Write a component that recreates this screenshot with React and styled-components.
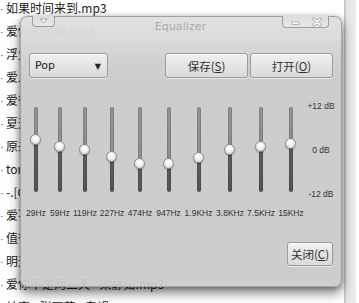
import React from "react";
import styled, { createGlobalStyle } from "styled-components";

const Global = createGlobalStyle`
  html, body { margin: 0; padding: 0; background: #ffffff; overflow: hidden; }
  #root { width: 359px; height: 303px; }
`;

const Page = styled.div`
  position: relative;
  width: 359px;
  height: 303px;
  overflow: hidden;
  display: flex;
  background: #ffffff;
`;

const FileList = styled.ul`
  flex: 1;
  list-style: none;
  margin: -4px 0 0 0;
  padding: 0;
  font-family: "Noto Sans CJK SC", "Noto Sans", sans-serif;
  font-size: 12px;
  color: #1c1c1c;
`;

const FileRow = styled.li`
  display: flex;
  align-items: center;
  height: 23px;
  white-space: nowrap;
`;

const Bullet = styled.span`
  width: 6px;
  flex: none;
  overflow: hidden;
  color: #555;
  font-family: "Liberation Sans", sans-serif;
  font-size: 11px;
  padding-top: 3px;
`;

const ScrollTrack = styled.div`
  width: 11px;
  margin-right: 3px;
  background: linear-gradient(to right, #cfcfcf 0, #e6e6e6 2px, #ececec 100%);
  border-left: 1px solid #c2c2c2;
`;

const Dialog = styled.div`
  position: absolute;
  left: 20px;
  top: 16px;
  width: 322px;
  height: 271px;
  box-sizing: border-box;
  border: 1px solid rgba(120, 120, 120, 0.55);
  border-radius: 7px;
  display: flex;
  flex-direction: column;
  background: linear-gradient(
    to bottom,
    rgba(224, 224, 224, 0.95) 0,
    rgba(217, 217, 217, 0.96) 22px,
    rgba(210, 210, 210, 1) 40px,
    #cdcdcd 60px,
    #cccccc calc(100% - 12px),
    rgba(204, 204, 204, 0.93) 100%
  );
  box-shadow: 0 6px 12px rgba(0, 0, 0, 0.5), 0 1px 5px rgba(0, 0, 0, 0.3);
`;

const TitleBar = styled.div`
  display: grid;
  grid-template-columns: 1fr auto 1fr;
  align-items: start;
  height: 36px;
  padding: 0 12px 0 11px;
`;

const Tab = styled.div`
  justify-self: ${(p) => (p.$end ? "end" : "start")};
  height: ${(p) => p.$h}px;
  width: ${(p) => p.$w}px;
  box-sizing: border-box;
  border: 1px solid #9d9d9d;
  border-top: none;
  border-radius: 0 0 4px 4px;
  background: linear-gradient(to bottom, #dcdcdc, #e8e8e8);
  display: flex;
  align-items: center;
  justify-content: center;
  margin-top: -1px;
`;

const Title = styled.div`
  padding-top: 4px;
  font-family: "DejaVu Sans", sans-serif;
  font-size: 11px;
  line-height: 12px;
  color: #ababab;
  letter-spacing: 0.1px;
`;

const Controls = styled.div`
  display: flex;
  align-items: center;
  gap: 2px;
  padding: 0 8px;
  height: 25px;
`;

const Spacer = styled.div`
  flex: 1;
`;

const Btn = styled.button`
  box-sizing: border-box;
  height: ${(p) => p.$h || 25}px;
  width: ${(p) => p.$w}px;
  padding: 0;
  border: 1px solid #9b9b9b;
  border-radius: 3px;
  background: linear-gradient(to bottom, #f1f1f1 0, #e3e3e3 55%, #dadada 100%);
  box-shadow: inset 0 1px 0 #fafafa, 0 1px 0 rgba(255, 255, 255, 0.5);
  font-family: "Noto Sans CJK SC", "Noto Sans", sans-serif;
  font-size: 11.5px;
  color: #333;
  display: flex;
  align-items: center;
  justify-content: center;
  u { text-decoration: underline; text-underline-offset: 1px; }
`;

const Preset = styled(Btn)`
  justify-content: space-between;
  padding: 0 6px 0 5px;
  font-family: "DejaVu Sans", sans-serif;
  font-size: 11px;
  color: #1e1e1e;
`;

const Arrow = styled.span`
  font-size: 8px;
  color: #222;
  padding-top: 1px;
`;

const EqArea = styled.div`
  display: flex;
  align-items: flex-start;
  margin-top: 29px;
  padding-left: 3px;
`;

const Band = styled.div`
  width: ${(p) => p.$w}px;
  display: flex;
  flex-direction: column;
  align-items: center;
`;

const TrackBox = styled.div`
  position: relative;
  width: 12px;
  height: 85px;
  display: flex;
  justify-content: center;
`;

const Groove = styled.div`
  width: 4px;
  height: 100%;
  border-radius: 2px;
  background: linear-gradient(
    to bottom,
    #939393 0,
    #8d8d8d ${(p) => p.$split}px,
    #5c5c5c ${(p) => p.$split}px,
    #555555 100%
  );
  box-shadow: inset 1px 0 0 rgba(0, 0, 0, 0.12), inset -1px 0 0 rgba(0, 0, 0, 0.12);
`;

const Thumb = styled.div`
  position: absolute;
  left: 0;
  width: 11px;
  height: 11px;
  box-sizing: border-box;
  border-radius: 50%;
  border: 1px solid #8c8c8c;
  background: radial-gradient(circle at 50% 35%, #ffffff 0, #f5f5f5 35%, #cfcfcf 100%);
  box-shadow: 0 1px 1px rgba(0, 0, 0, 0.25);
`;

const FreqLabel = styled.div`
  margin-top: 16px;
  font-family: "Liberation Sans", sans-serif;
  font-size: 8.5px;
  line-height: 10px;
  color: #333333;
  white-space: nowrap;
  font-variant-numeric: oldstyle-nums;
`;

const Scale = styled.div`
  margin-top: -6px;
  margin-left: 1px;
  width: 28px;
  height: 98px;
  display: flex;
  flex-direction: column;
  justify-content: space-between;
  align-items: center;
  font-family: "Liberation Sans", sans-serif;
  font-size: 8.5px;
  line-height: 10px;
  color: #333333;
  white-space: nowrap;
`;

const Footer = styled.div`
  display: flex;
  justify-content: flex-end;
  margin-top: 24px;
  padding: 0 8px;
`;

const files = [
  "如果时间来到.mp3",
  "爱你的时候.mp3",
  "浮生若梦.mp3",
  "爱上你.mp3",
  "爱很简单.mp3",
  "夏天的风.mp3",
  "原来你也在这里.mp3",
  "tornado.mp3",
  "-.[Cover]如果.mp3",
  "爱不释手.mp3",
  "值得.mp3",
  "明天过后.mp3",
  "爱你不是两三天 - 梁静茹.mp3",
  "结束 - 张国荣 - 专辑.mp3",
];

const bands = [
  { label: "29Hz", w: 24, y: 140.7 },
  { label: "59Hz", w: 24, y: 147.7 },
  { label: "119Hz", w: 26, y: 150.7 },
  { label: "227Hz", w: 28, y: 157.7 },
  { label: "474Hz", w: 28, y: 164.3 },
  { label: "947Hz", w: 29, y: 164.3 },
  { label: "1.9KHz", w: 31, y: 158.3 },
  { label: "3.8KHz", w: 32, y: 150.7 },
  { label: "7.5KHz", w: 30, y: 147.7 },
  { label: "15KHz", w: 30, y: 144.3 },
];

const TRACK_TOP = 108;

function MenuGlyph() {
  return (
    <svg width="9" height="6" viewBox="0 0 9 6">
      <path d="M1 1 L8 1 L4.5 5 Z" fill="#ffffff" stroke="#9a9a9a" strokeWidth="0.9" strokeLinejoin="round" />
    </svg>
  );
}

function WinGlyphs() {
  return (
    <svg width="45" height="10" viewBox="0 0 45 10">
      <rect x="9" y="5" width="7" height="2.4" fill="#ffffff" stroke="#9a9a9a" strokeWidth="0.7" />
      <path d="M31 2 L37 8 M37 2 L31 8" stroke="#9a9a9a" strokeWidth="3" strokeLinecap="round" />
      <path d="M31 2 L37 8 M37 2 L31 8" stroke="#ffffff" strokeWidth="1.6" strokeLinecap="round" />
    </svg>
  );
}

export default function App() {
  return (
    <>
      <Global />
      <Page>
        <FileList>
          {files.map((f, i) => (
            <FileRow key={i}>
              <Bullet>·</Bullet>
              <span>{f}</span>
            </FileRow>
          ))}
        </FileList>
        <ScrollTrack />
        <Dialog>
          <TitleBar>
            <Tab $w={23} $h={11}>
              <MenuGlyph />
            </Tab>
            <Title>Equalizer</Title>
            <Tab $end $w={47} $h={12}>
              <WinGlyphs />
            </Tab>
          </TitleBar>
          <Controls>
            <Preset $w={79}>
              <span>Pop</span>
              <Arrow>▼</Arrow>
            </Preset>
            <Spacer />
            <Btn $w={83}>
              保存(<u>S</u>)
            </Btn>
            <Btn $w={83}>
              打开(<u>O</u>)
            </Btn>
          </Controls>
          <EqArea>
            {bands.map((b) => {
              const c = b.y - TRACK_TOP;
              return (
                <Band key={b.label} $w={b.w}>
                  <TrackBox>
                    <Groove $split={c} />
                    <Thumb style={{ top: `${c - 5.5}px` }} />
                  </TrackBox>
                  <FreqLabel>{b.label}</FreqLabel>
                </Band>
              );
            })}
            <Scale>
              <span>+12 dB</span>
              <span>0 dB</span>
              <span>-12 dB</span>
            </Scale>
          </EqArea>
          <Footer>
            <Btn $w={46} $h={24}>
              关闭(<u>C</u>)
            </Btn>
          </Footer>
        </Dialog>
      </Page>
    </>
  );
}
